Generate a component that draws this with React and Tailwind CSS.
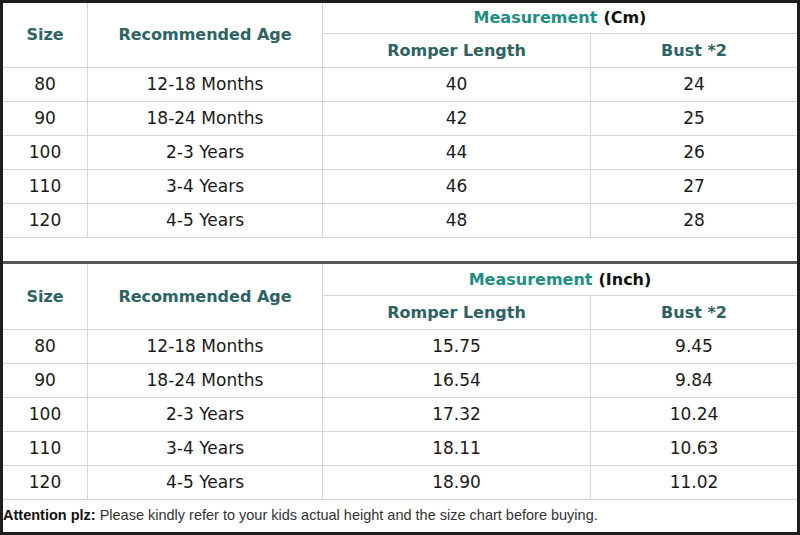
const cmRows = [
  ["80", "12-18 Months", "40", "24"],
  ["90", "18-24 Months", "42", "25"],
  ["100", "2-3 Years", "44", "26"],
  ["110", "3-4 Years", "46", "27"],
  ["120", "4-5 Years", "48", "28"],
];

const inchRows = [
  ["80", "12-18 Months", "15.75", "9.45"],
  ["90", "18-24 Months", "16.54", "9.84"],
  ["100", "2-3 Years", "17.32", "10.24"],
  ["110", "3-4 Years", "18.11", "10.63"],
  ["120", "4-5 Years", "18.90", "11.02"],
];

const line = "border-[#d6d6d6]";
const head = "text-[16px] font-bold text-[#2d6363]";

function SizeTable({ unit, rows, topHeight }) {
  return (
    <div
      className={`grid grid-cols-[85px_235px_268px_1fr] ${topHeight} font-['DejaVu_Sans',sans-serif]`}
    >
      <div className={`row-span-2 flex items-center justify-center border-r border-b ${line} ${head}`}>
        Size
      </div>
      <div className={`row-span-2 flex items-center justify-center border-r border-b ${line} ${head}`}>
        Recommended Age
      </div>
      <div className={`col-span-2 flex items-center justify-center border-b ${line} text-[16px] font-bold`}>
        <span className="text-[#1d8f82]">Measurement</span>
        <span className="ml-[6px] text-[#111]">({unit})</span>
      </div>
      <div className={`flex items-center justify-center border-r border-b ${line} ${head}`}>
        Romper Length
      </div>
      <div className={`flex items-center justify-center border-b ${line} ${head}`}>
        Bust *2
      </div>
      {rows.map((row) =>
        row.map((cell, i) => (
          <div
            key={row[0] + i}
            className={`flex items-center justify-center border-b ${line} ${i < 3 ? "border-r" : ""} text-[17px] text-[#1a1a1a]`}
          >
            {cell}
          </div>
        ))
      )}
    </div>
  );
}

export default function App() {
  return (
    <div className="h-[535px] w-[800px] overflow-hidden bg-white">
      <div className="flex h-full flex-col border-[3px] border-[#1e1e1e]">
        <SizeTable unit="Cm" rows={cmRows} topHeight="grid-rows-[31px_34px_repeat(5,34px)]" />
        <div className="h-[23px]" />
        <div className="h-[3px] bg-[#585858]" />
        <SizeTable unit="Inch" rows={inchRows} topHeight="grid-rows-[32px_34px_repeat(5,34px)]" />
        <div className="flex flex-1 items-center font-['Liberation_Sans',Arial,sans-serif] text-[14.5px] text-[#333]">
          <span className="font-bold text-[#111]">Attention plz:</span>
          <span className="ml-[4px]">Please kindly refer to your kids actual height and the size chart before buying.</span>
        </div>
      </div>
    </div>
  );
}
